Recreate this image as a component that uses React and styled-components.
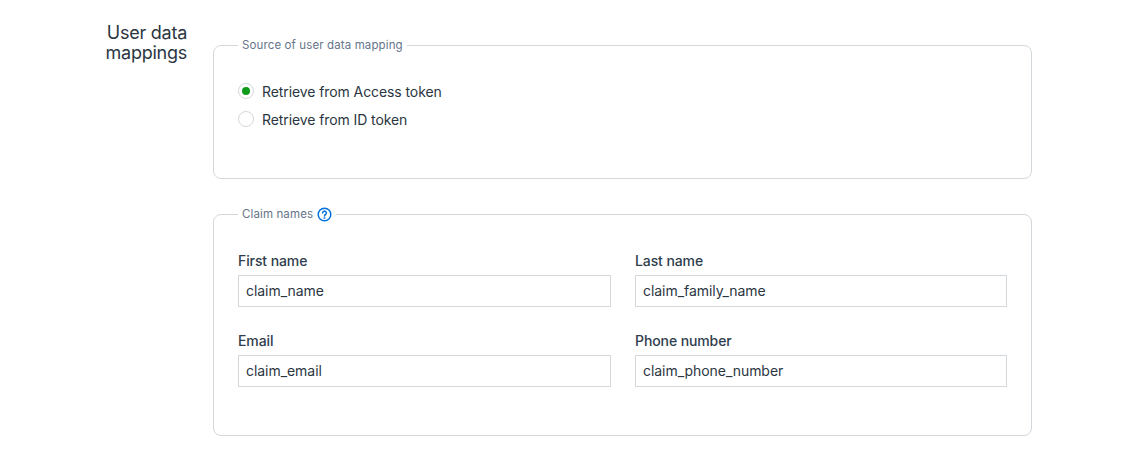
import React from "react";
import styled, { createGlobalStyle } from "styled-components";

const GlobalStyle = createGlobalStyle`
  html, body {
    margin: 0;
    padding: 0;
    background: #fff;
    font-family: Inter, "Liberation Sans", sans-serif;
  }
`;

const Page = styled.div`
  display: flex;
  align-items: flex-start;
  width: 1148px;
  height: 470px;
  box-sizing: border-box;
  padding-top: 23px;
  overflow: hidden;
`;

const SectionTitle = styled.h2`
  width: 187px;
  flex: none;
  margin: 0;
  text-align: right;
  font-size: 18px;
  line-height: 20px;
  font-weight: 400;
  letter-spacing: -0.25px;
  color: #2b3642;
`;

const Groups = styled.div`
  width: 819px;
  margin-left: 26px;
  display: flex;
  flex-direction: column;
  gap: 25px;
  margin-top: 12px;
`;

const Group = styled.fieldset`
  margin: 0;
  box-sizing: border-box;
  height: ${(p) => p.$height}px;
  padding: 0 24px;
  border: 1px solid #d3d8dc;
  border-radius: 8px;
  min-width: 0;
`;

const Legend = styled.legend`
  display: flex;
  align-items: center;
  gap: 4px;
  height: 20px;
  padding: 0 4px;
  font-size: 11.5px;
  letter-spacing: 0.12px;
  color: #66758a;
`;

const HelpIcon = () => (
  <svg width="15" height="15" viewBox="0 0 16 16" fill="none" stroke="#0070dd" strokeWidth="1.6" strokeLinecap="round">
    <circle cx="8" cy="8" r="6.7" />
    <path d="M6 6.3a2 2 0 1 1 3.1 1.7c-.7.4-1.1.8-1.1 1.5" />
    <circle cx="8" cy="11.8" r=".3" fill="#0070dd" />
  </svg>
);

const RadioList = styled.div`
  display: flex;
  flex-direction: column;
  gap: 8px;
  padding-top: 26px;
`;

const RadioRow = styled.label`
  display: flex;
  align-items: center;
  gap: 8px;
  height: 20px;
  font-size: 14px;
  letter-spacing: -0.09px;
  color: #2b3642;
`;

const RadioMark = styled.span`
  width: 16px;
  height: 16px;
  box-sizing: border-box;
  border: 1px solid #d3d8dc;
  border-radius: 50%;
  display: flex;
  align-items: center;
  justify-content: center;

  &::after {
    content: "";
    width: 8px;
    height: 8px;
    border-radius: 50%;
    background: ${(p) => (p.$checked ? "#0e9a1a" : "transparent")};
  }
`;

const FieldGrid = styled.div`
  display: grid;
  grid-template-columns: 373px 372px;
  column-gap: 24px;
  row-gap: 24px;
  padding-top: 27px;
`;

const Field = styled.div`
  display: flex;
  flex-direction: column;
  gap: 4px;
`;

const FieldLabel = styled.label`
  font-size: 14px;
  line-height: 20px;
  font-weight: 500;
  letter-spacing: -0.1px;
  color: #2f3d4d;
`;

const TextInput = styled.input`
  box-sizing: border-box;
  width: 100%;
  height: 32px;
  padding: 0 7px 2px;
  border: 1px solid #d3d8dc;
  border-radius: 0;
  outline: none;
  font-family: inherit;
  font-size: 14px;
  letter-spacing: -0.05px;
  color: #2b3642;
`;

const fields = [
  ["First name", "claim_name"],
  ["Last name", "claim_family_name"],
  ["Email", "claim_email"],
  ["Phone number", "claim_phone_number"],
];

export default function App() {
  return (
    <Page>
      <GlobalStyle />
      <SectionTitle>
        User data
        <br />
        mappings
      </SectionTitle>
      <Groups>
        <Group $height={144}>
          <Legend>Source of user data mapping</Legend>
          <RadioList>
            <RadioRow>
              <RadioMark $checked />
              Retrieve from Access token
            </RadioRow>
            <RadioRow>
              <RadioMark />
              Retrieve from ID token
            </RadioRow>
          </RadioList>
        </Group>
        <Group $height={232}>
          <Legend>
            Claim names <HelpIcon />
          </Legend>
          <FieldGrid>
            {fields.map(([label, value]) => (
              <Field key={label}>
                <FieldLabel>{label}</FieldLabel>
                <TextInput defaultValue={value} />
              </Field>
            ))}
          </FieldGrid>
        </Group>
      </Groups>
    </Page>
  );
}
